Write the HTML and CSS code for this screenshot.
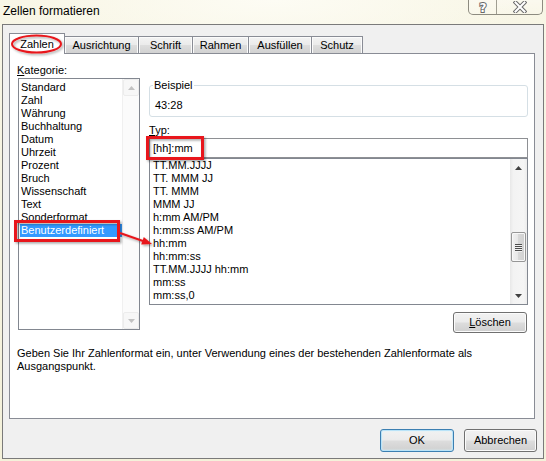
FILE: index.html
```html
<!DOCTYPE html>
<html lang="de">
<head>
<meta charset="utf-8">
<title>Zellen formatieren</title>
<link rel="stylesheet" href="styles.css">
</head>
<body>
<div class="window">
  <div class="titlebar">
    <span class="title">Zellen formatieren</span>
    <div class="caption">
      <div class="cap help">
        <svg width="14" height="14" viewBox="0 0 14 14"><text x="7" y="11.5" text-anchor="middle" class="qmark">?</text></svg>
      </div>
      <div class="cap close">
        <svg width="14" height="12" viewBox="0 0 14 12">
          <path d="M2.5 1.5 L11.5 10.5 M11.5 1.5 L2.5 10.5" stroke="#6a6a6a" stroke-width="4" stroke-linecap="square" fill="none"/>
          <path d="M2.5 1.5 L11.5 10.5 M11.5 1.5 L2.5 10.5" stroke="#ffffff" stroke-width="2" stroke-linecap="square" fill="none"/>
        </svg>
      </div>
    </div>
  </div>

  <div class="client">
    <div class="tabs">
      <div class="tab active w-zahlen">Zahlen</div>
      <div class="tab w-ausr">Ausrichtung</div>
      <div class="tab w-schrift">Schrift</div>
      <div class="tab w-rahmen">Rahmen</div>
      <div class="tab w-ausf">Ausfüllen</div>
      <div class="tab w-schutz">Schutz</div>
    </div>

    <div class="panel">
      <div class="cols">
        <div class="leftcol">
          <div class="label"><u>K</u>ategorie:</div>
          <div class="listbox cat">
            <ul class="items">
              <li>Standard</li>
              <li>Zahl</li>
              <li>Währung</li>
              <li>Buchhaltung</li>
              <li>Datum</li>
              <li>Uhrzeit</li>
              <li>Prozent</li>
              <li>Bruch</li>
              <li>Wissenschaft</li>
              <li>Text</li>
              <li>Sonderformat</li>
              <li class="selected">Benutzerdefiniert</li>
            </ul>
            <div class="scrollbar disabled">
              <div class="sbtn"><svg width="7" height="4" viewBox="0 0 7 4"><polygon points="0,4 3.5,0 7,4" class="arrow"/></svg></div>
              <div class="track"></div>
              <div class="sbtn"><svg width="7" height="4" viewBox="0 0 7 4"><polygon points="0,0 3.5,4 7,0" class="arrow"/></svg></div>
            </div>
          </div>
        </div>

        <div class="rightcol">
          <fieldset class="group">
            <legend>Beispiel</legend>
            <div class="sample">43:28</div>
          </fieldset>
          <div class="label typ"><u>T</u>yp:</div>
          <div class="input">[hh]:mm</div>
          <div class="listbox fmt">
            <ul class="items">
              <li>TT.MM.JJJJ</li>
              <li>TT. MMM JJ</li>
              <li>TT. MMM</li>
              <li>MMM JJ</li>
              <li>h:mm AM/PM</li>
              <li>h:mm:ss AM/PM</li>
              <li>hh:mm</li>
              <li>hh:mm:ss</li>
              <li>TT.MM.JJJJ hh:mm</li>
              <li>mm:ss</li>
              <li>mm:ss,0</li>
            </ul>
            <div class="scrollbar">
              <div class="sbtn"><svg width="7" height="4" viewBox="0 0 7 4"><polygon points="0,4 3.5,0 7,4" class="arrow"/></svg></div>
              <div class="track">
                <div class="thumb">
                  <span class="grip"></span><span class="grip"></span><span class="grip"></span><span class="grip"></span>
                </div>
              </div>
              <div class="sbtn"><svg width="7" height="4" viewBox="0 0 7 4"><polygon points="0,0 3.5,4 7,0" class="arrow"/></svg></div>
            </div>
          </div>
          <div class="btnrow">
            <button class="btn loeschen"><u>L</u>öschen</button>
          </div>
        </div>
      </div>
      <p class="desc">Geben Sie Ihr Zahlenformat ein, unter Verwendung eines der bestehenden Zahlenformate als Ausgangspunkt.</p>
    </div>

    <div class="footer">
      <button class="btn default ok">OK</button>
      <button class="btn cancel">Abbrechen</button>
    </div>
  </div>

  <svg class="annot" width="546" height="461" viewBox="0 0 546 461">
    <defs>
      <filter id="sh" x="-20%" y="-20%" width="140%" height="160%">
        <feDropShadow dx="1.5" dy="1.5" stdDeviation="1" flood-color="#000" flood-opacity="0.35"/>
      </filter>
    </defs>
    <g filter="url(#sh)" fill="none" stroke="#e8171b">
      <ellipse cx="36.5" cy="44" rx="24.5" ry="8.5" stroke-width="2"/>
      <rect x="15.5" y="221.5" width="103" height="19" stroke-width="3"/>
      <rect x="147.5" y="137.5" width="55" height="21" stroke-width="3"/>
      <line x1="120" y1="233" x2="143" y2="241" stroke-width="2"/>
      <polygon points="152,244 141.2,244.5 143.8,237" fill="#e8171b" stroke="none"/>
    </g>
  </svg>
</div>
</body>
</html>
```

FILE: styles.css
```css
* { box-sizing: border-box; }
html, body { margin: 0; padding: 0; }
body {
  width: 546px;
  height: 461px;
  overflow: hidden;
  font-family: "Liberation Sans", Arial, sans-serif;
  font-size: 11px;
  color: #000;
}
ul { list-style: none; margin: 0; padding: 0; }
u { text-decoration: underline; text-underline-offset: 1px; }

.window {
  position: relative;
  width: 546px;
  height: 461px;
  background:
    radial-gradient(ellipse 260px 60px at 50% 0%, #fdfcf4 0%, rgba(253,252,244,0) 100%),
    linear-gradient(#f8f6e6, #f4f1da);
}

/* title bar */
.titlebar {
  height: 24px;
  display: flex;
  justify-content: space-between;
  align-items: flex-start;
  padding: 0 3px 0 3px;
}
.title { font-size: 12px; line-height: 22px; }
.caption {
  display: flex;
  margin-top: -1px;
  height: 16px;
  border: 1px solid #8d8b80;
  border-top: none;
  border-radius: 0 0 5px 5px;
  background: linear-gradient(rgba(255,255,255,0.35), rgba(255,255,255,0.1));
}
.cap { display: flex; align-items: center; justify-content: center; height: 15px; }
.cap.help { width: 28px; border-right: 1px solid #a09e92; }
.cap.close { width: 45px; }
.qmark {
  font-family: "DejaVu Sans", sans-serif;
  font-weight: bold;
  font-size: 12px;
  fill: #ffffff;
  stroke: #6a6a6a;
  stroke-width: 2px;
  paint-order: stroke;
}

/* client area */
.client {
  margin-left: 2px;
  width: 542px;
  height: 435px;
  border: 1px solid #7a7a7a;
  background: #f0f0f0;
  padding: 8px 0 0 6px;
}

/* tabs */
.tabs {
  display: flex;
  align-items: flex-end;
  height: 20px;
  position: relative;
  z-index: 1;
}
.tab {
  height: 17px;
  padding-top: 2px;
  line-height: 13px;
  text-align: center;
  border: 1px solid #898c95;
  border-bottom: none;
  margin-left: -1px;
  background: linear-gradient(#f3f3f3 0%, #ebebeb 48%, #dddddd 52%, #d2d2d2 100%);
  box-shadow: inset 1px 1px 0 #fbfbfb, inset -1px 0 0 #fbfbfb;
}
.tab.active {
  height: 21px;
  margin-bottom: -1px;
  margin-left: 0;
  padding-top: 4px;
  background: #fff;
  box-shadow: none;
  position: relative;
  z-index: 2;
}
.w-zahlen { width: 56px; }
.w-ausr { width: 75px; }
.w-schrift { width: 55px; }
.w-rahmen { width: 57px; }
.w-ausf { width: 64px; }
.w-schutz { width: 52px; }

/* panel */
.panel {
  width: 526px;
  height: 366px;
  border: 1px solid #898c95;
  background: #fff;
  padding: 10px 0 0 7px;
}
.cols { display: flex; align-items: flex-start; }
.leftcol { width: 132px; }
.label { line-height: 13px; }

.listbox {
  border: 1px solid #828790;
  display: flex;
  background: #fff;
}
.listbox .items { flex: 1; }
.listbox li { line-height: 13px; padding-left: 1px; margin-left: 1px; white-space: nowrap; }
.listbox li.selected { background: #3399ff; color: #fff; }

.cat { width: 122px; height: 252px; margin: 1px 0 0 1px; }
.cat .items { padding-top: 2px; }

.scrollbar {
  width: 17px;
  display: flex;
  flex-direction: column;
  background: linear-gradient(to right, #e8e8e8, #f3f3f3 20%, #f5f5f5 80%, #ececec);
}
.sbtn {
  height: 17px;
  display: flex;
  align-items: center;
  justify-content: center;
}
.track { flex: 1; }
.arrow { fill: #404040; }
.scrollbar.disabled { background: #fbfbfb; border-left: 1px solid #f0f0f0; }
.scrollbar.disabled .sbtn { border: 1px solid #ececec; border-radius: 2px; background: #f7f7f7; }
.scrollbar.disabled .arrow { fill: #c2c2c2; }

.rightcol { width: 379px; margin-top: 15px; }

.group {
  margin: 0;
  padding: 7px 0 4px 3px;
  border: 1px solid #d5dfe5;
  border-radius: 3px;
  min-width: 0;
}
.group legend { padding: 0 1px; line-height: 13px; }
.sample { line-height: 13px; padding-left: 2px; }

.typ { margin-top: 7px; }
.input {
  margin-top: 1px;
  height: 20px;
  border: 1px solid #8e9094;
  line-height: 18px;
  padding-left: 3px;
  background: #fff;
}
.fmt { height: 147px; }
.fmt .items { padding-left: 1px; }

.fmt .track { padding-top: 56px; }
.thumb {
  margin-left: 1px;
  width: 15px;
  height: 30px;
  border: 1px solid #979797;
  border-radius: 2px;
  background: linear-gradient(to right, #f2f2f2, #e6e6e6 50%, #d8d8d8 50%, #d0d0d0);
  box-shadow: inset 0 0 0 1px #f8f8f8;
  display: flex;
  flex-direction: column;
  align-items: center;
  justify-content: center;
  gap: 1px;
}
.grip {
  display: block;
  width: 7px;
  height: 1px;
  background: #4d4d4d;
  box-shadow: 0 1px 0 #f0f0f0;
}

.btnrow { display: flex; justify-content: flex-end; margin-top: 7px; padding-right: 1px; }

.btn {
  font-family: "Liberation Sans", Arial, sans-serif;
  font-size: 11px;
  color: #000;
  padding: 0;
  border: 1px solid #707070;
  border-radius: 3px;
  background: linear-gradient(#f2f2f2 0%, #ebebeb 48%, #dddddd 52%, #cfcfcf 100%);
  box-shadow: inset 0 0 0 1px #fbfbfb;
  line-height: 13px;
}
.loeschen { width: 74px; height: 21px; }

.desc { margin: 14px 0 0 0; line-height: 13px; width: 470px; }

.footer {
  display: flex;
  justify-content: flex-end;
  gap: 10px;
  margin-top: 10px;
  margin-right: 6px;
}
.ok { width: 74px; height: 23px; }
.cancel { width: 73px; height: 23px; }
.btn.default {
  border-color: #3c7fb1;
  box-shadow: inset 0 0 0 1px #b9e3f8, inset 0 0 2px 1px #d8f1fc;
}

.annot {
  position: absolute;
  left: 0;
  top: 0;
  z-index: 10;
  pointer-events: none;
}
```
